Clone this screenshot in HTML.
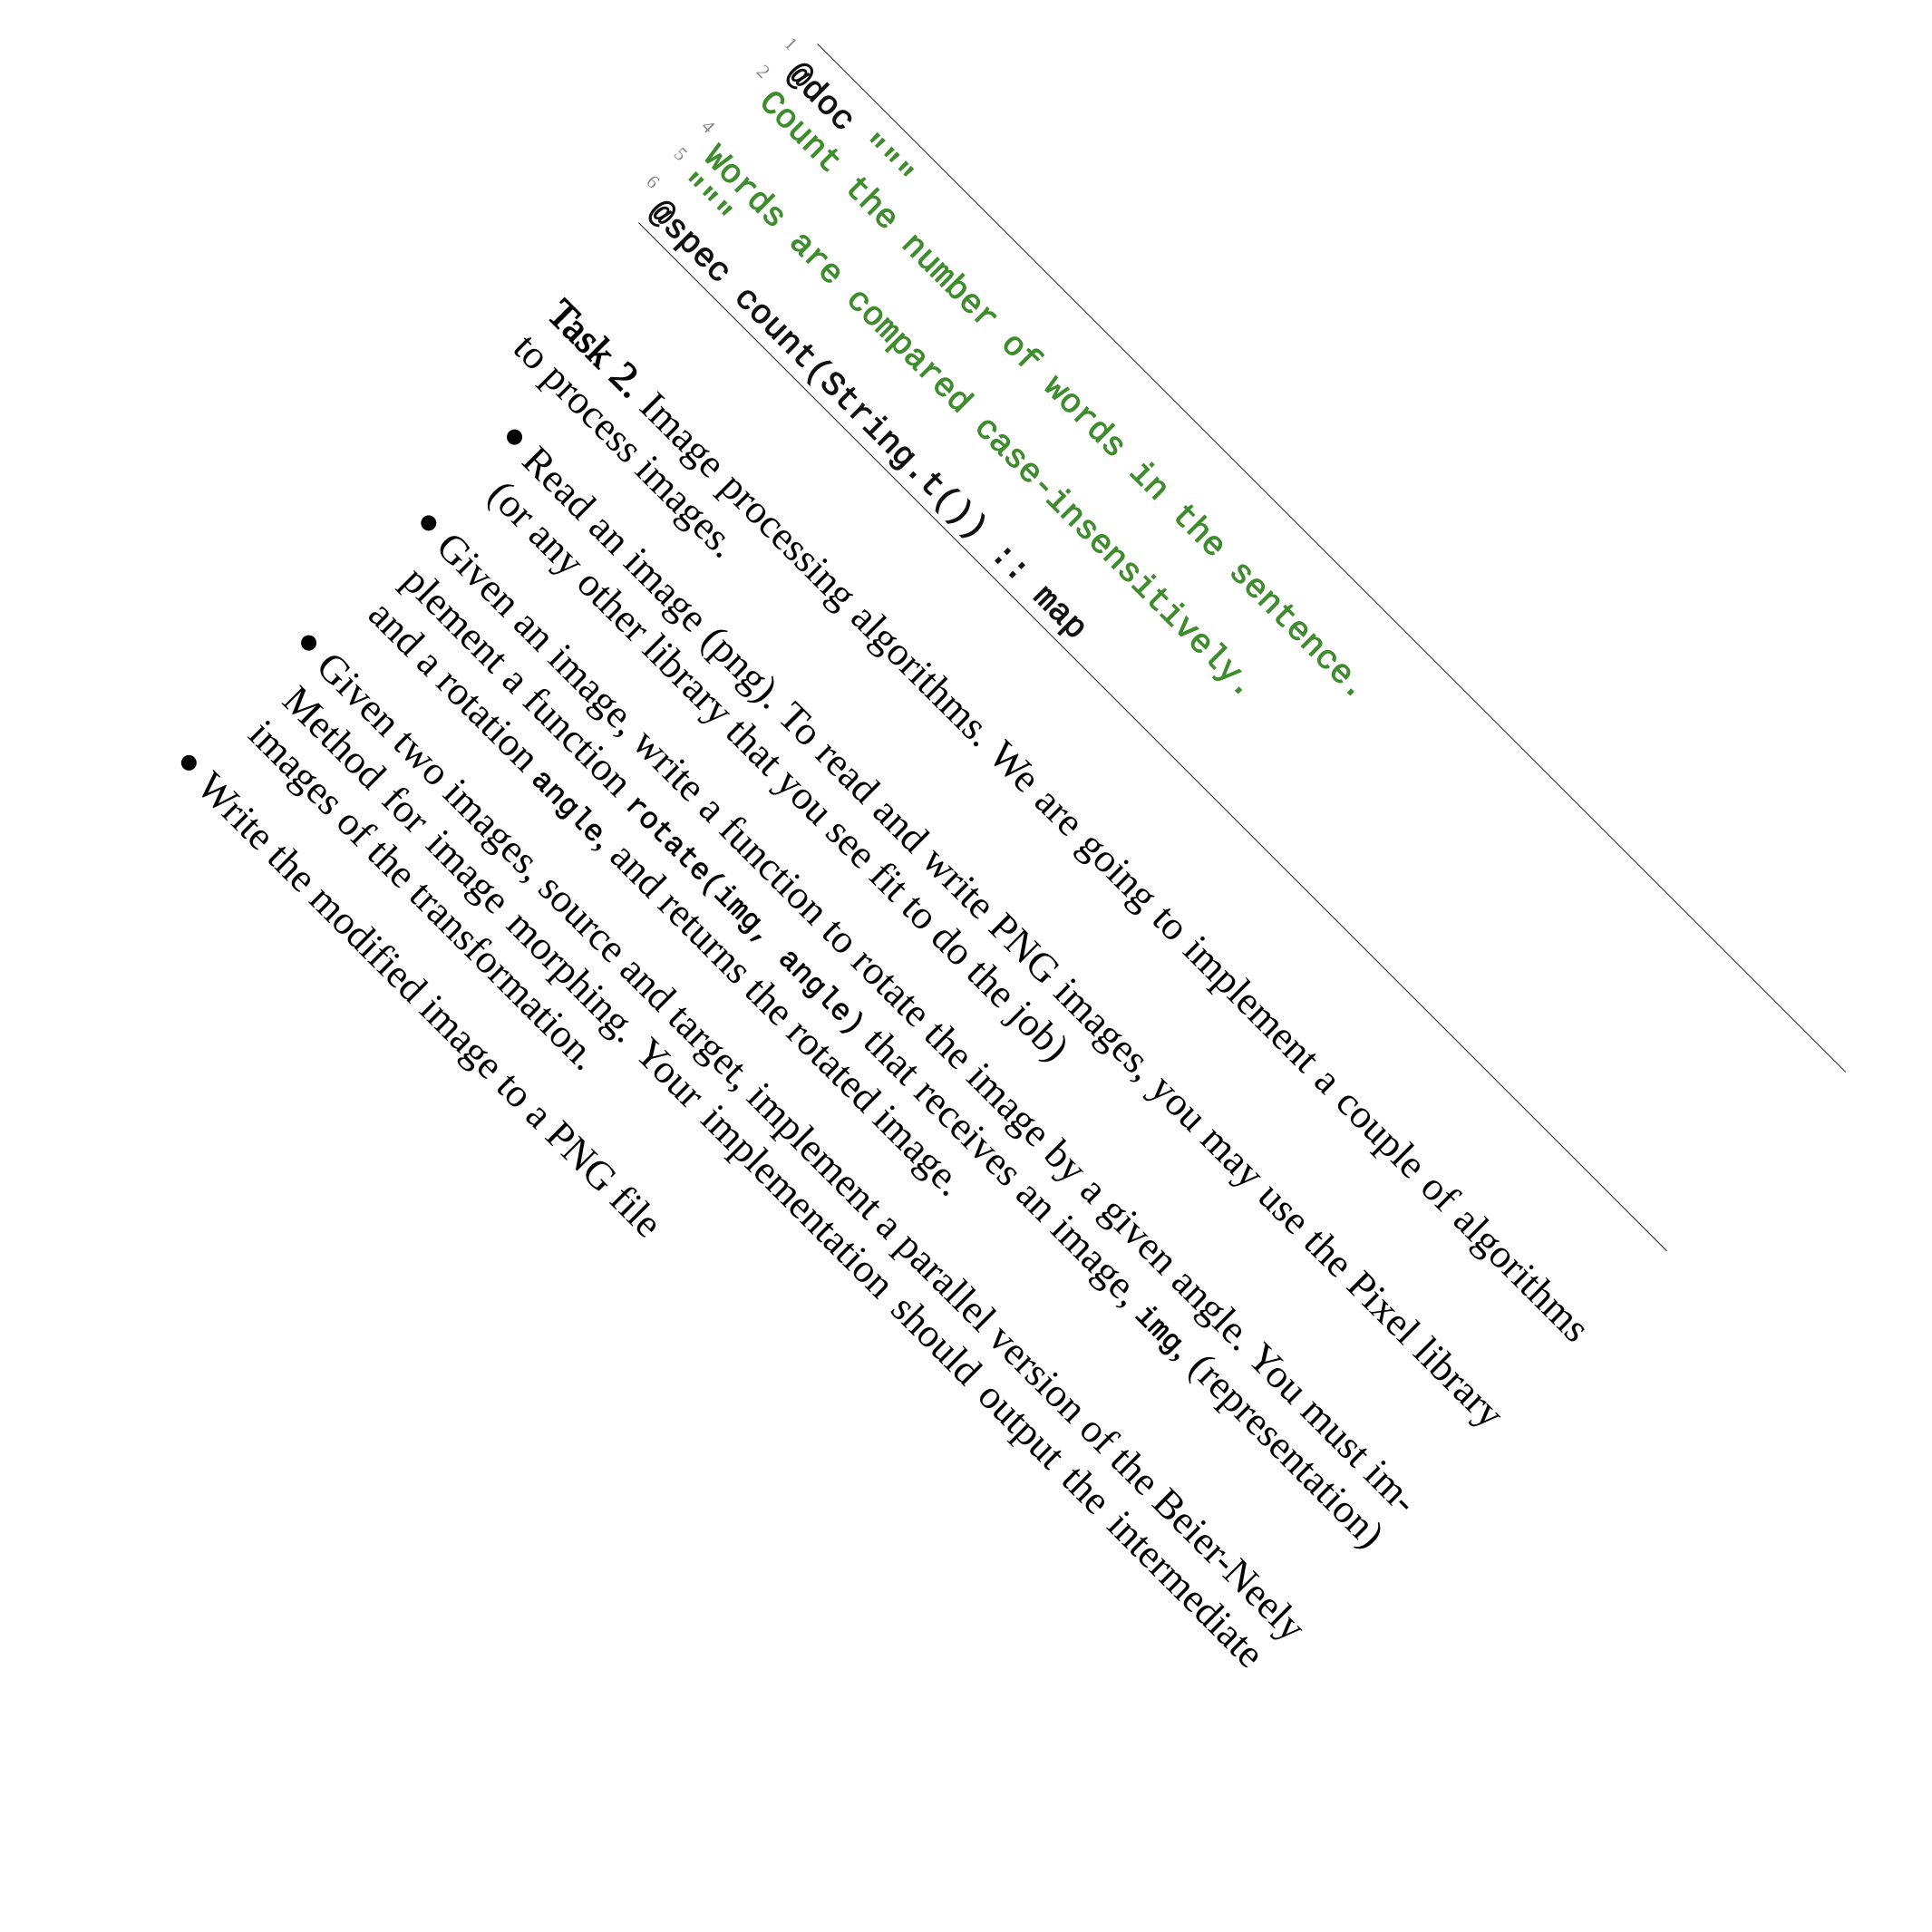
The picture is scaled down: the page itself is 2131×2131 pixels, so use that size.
<!DOCTYPE html>
<html><head><meta charset="utf-8"><style>
html,body{margin:0;padding:0;background:#fff;width:2131px;height:2131px;overflow:hidden}
#r{position:absolute;left:902px;top:48px;width:1604px;height:1200px;transform-origin:0 0;transform:rotate(45deg)}
.rule{position:absolute;left:0;width:1604px;height:0;border-top:1.5px solid #222}
.c{position:absolute;left:0;height:43px;line-height:43px;font-family:"Liberation Mono","Courier New",monospace;font-weight:normal;-webkit-text-stroke:1px currentColor;font-size:37px;white-space:pre;color:#111}
.g{color:#3f8c2e}
.n{position:absolute;left:-26px;height:30px;line-height:30px;font-family:"Liberation Serif",serif;font-size:21px;color:#888}
.l{position:absolute;height:54px;line-height:54px;font-family:"Liberation Serif",serif;font-size:44.5px;color:#000;white-space:nowrap;text-align:justify;text-align-last:justify}
.l.e{text-align-last:left}
.t{-webkit-text-stroke:1.3px #000;font-weight:normal}
.m{font-family:"Liberation Mono",monospace;font-weight:normal;-webkit-text-stroke:0.8px #000;font-size:33px}
.b{position:absolute;left:62px;width:17px;height:17px;border-radius:50%;background:#000}
</style></head><body>
<div id="r">
<div class="rule" style="top:0"></div>
<div class="rule" style="top:279px"></div>
<div class="n" style="top:6px">1</div>
<div class="c" style="top:20px">@doc <span class="g">"""</span></div>
<div class="n" style="top:49px">2</div>
<div class="c g" style="top:63px">Count the number of words in the sentence.</div>
<div class="n" style="top:135px">4</div>
<div class="c g" style="top:149px">Words are compared case-insensitively.</div>
<div class="n" style="top:178px">5</div>
<div class="c g" style="top:192px">"""</div>
<div class="n" style="top:221px">6</div>
<div class="c" style="top:235px">@spec count(String.t()) :: map</div>

<div class="l" style="top:383px;left:0;width:1604px"><span class="t">Task 2.</span> Image processing algorithms. We are going to implement a couple of algorithms</div>
<div class="l e" style="top:436px;left:0;width:1604px">to process images.</div>

<div class="b" style="top:535px"></div>
<div class="l" style="top:517px;left:95px;width:1509px">Read an image (png). To read and write PNG images, you may use the Pixel library</div>
<div class="l e" style="top:570px;left:95px;width:1509px">(or any other library that you see fit to do the job)</div>

<div class="b" style="top:669px"></div>
<div class="l" style="top:651px;left:95px;width:1509px">Given an image, write a function to rotate the image by a given angle. You must im-</div>
<div class="l" style="top:704px;left:95px;width:1509px">plement a function <span class="m">rotate(img, angle)</span> that receives an image, <span class="m">img</span>, (representation)</div>
<div class="l e" style="top:757px;left:95px;width:1509px">and a rotation <span class="m">angle</span>, and returns the rotated image.</div>

<div class="b" style="top:856px"></div>
<div class="l" style="top:838px;left:95px;width:1509px">Given two images, source and target, implement a parallel version of the Beier-Neely</div>
<div class="l" style="top:891px;left:95px;width:1509px">Method for image morphing. Your implementation should output the intermediate</div>
<div class="l e" style="top:944px;left:95px;width:1509px">images of the transformation.</div>

<div class="b" style="top:1043px"></div>
<div class="l e" style="top:1025px;left:95px;width:1509px">Write the modified image to a PNG file</div>
</div>
</body></html>
